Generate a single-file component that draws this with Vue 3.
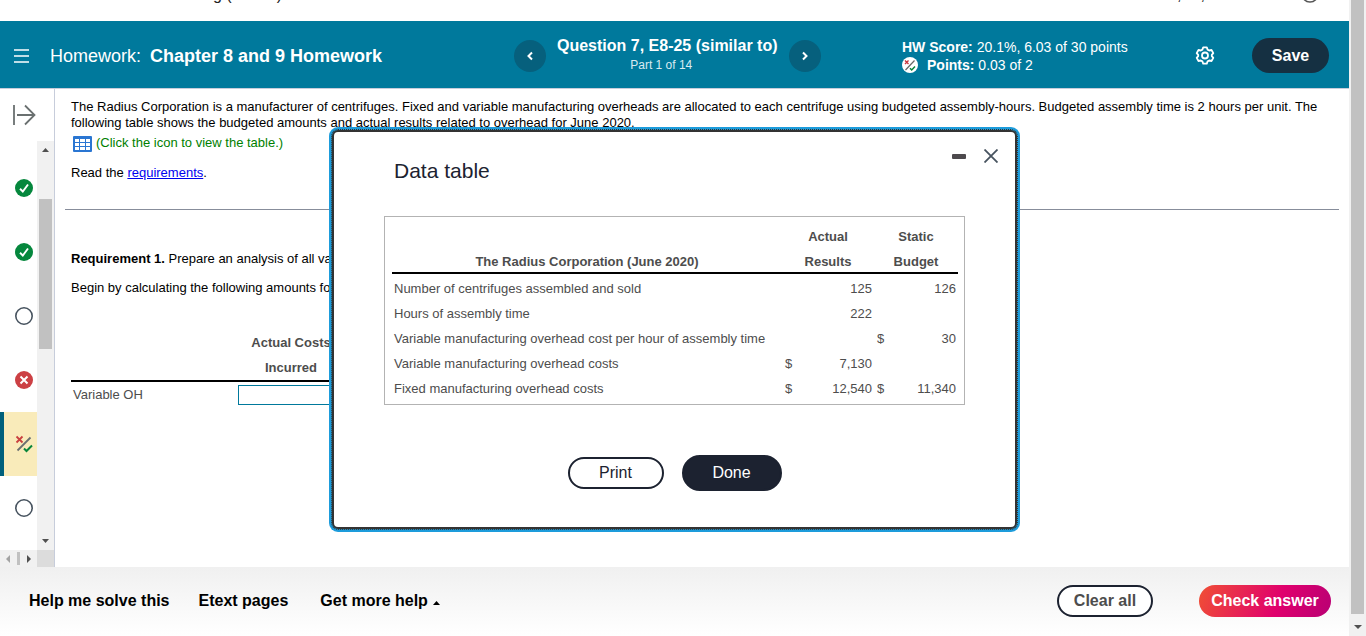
<template>
  <div class="page">
    <div class="main">
      <div class="course-bar">
        <span class="course-name"><span>g (</span><span>)</span></span>
        <span class="user-name"><span>,</span><span>,</span></span>
        <svg class="help-icon" width="18" height="18" viewBox="0 0 18 18">
          <circle cx="9" cy="9" r="8" fill="none" stroke="#555" stroke-width="1.5" />
        </svg>
      </div>

      <header class="header">
        <div class="assignment">
          <button class="icon-button menu" aria-label="Menu">
            <svg width="15" height="14" viewBox="0 0 15 14">
              <path d="M0 1H15M0 7H15M0 13H15" stroke="#fff" stroke-width="1.6" />
            </svg>
          </button>
          <span>Homework:</span>
          <strong>Chapter 8 and 9 Homework</strong>
        </div>
        <div class="question-nav">
          <button class="round" aria-label="Previous question">
            <svg width="8" height="10" viewBox="0 0 8 10">
              <path d="M6 1.5L2.5 5L6 8.5" fill="none" stroke="#fff" stroke-width="2" />
            </svg>
          </button>
          <div class="question">
            <strong>Question 7, E8-25 (similar to)</strong>
            <span class="part">Part 1 of 14</span>
          </div>
          <button class="round" aria-label="Next question">
            <svg width="8" height="10" viewBox="0 0 8 10">
              <path d="M2 1.5L5.5 5L2 8.5" fill="none" stroke="#fff" stroke-width="2" />
            </svg>
          </button>
        </div>
        <div class="score-area">
          <div class="scores">
            <div><b>HW Score:</b> 20.1%, 6.03 of 30 points</div>
            <div class="points">
              <svg width="16" height="16" viewBox="0 0 16 16">
                <circle cx="8" cy="8" r="8" fill="#fff" />
                <path d="M3.5 13L12.5 3.5" stroke="#666" stroke-width="1.2" />
                <path d="M3 3.5L6.5 7M6.5 3.5L3 7" stroke="#c8373e" stroke-width="1.4" />
                <path d="M8 11.2L9.7 13L13 9.5" fill="none" stroke="#07853a" stroke-width="1.5" />
              </svg>
              <span><b>Points:</b> 0.03 of 2</span>
            </div>
          </div>
          <div class="header-actions">
            <button class="icon-button" aria-label="Settings">
              <svg width="20" height="20" viewBox="0 0 20 20" fill="none" stroke="#fff" stroke-width="1.8" stroke-linejoin="round">
                <path d="M8.2 1.4H11.8L12.6 3.6L14.2 4.5L16.5 4L18.3 7.1L16.8 8.9V10.1L18.3 11.9L16.5 15L14.2 14.5L12.6 15.4L11.8 17.6H8.2L7.4 15.4L5.8 14.5L3.5 15L1.7 11.9L3.2 10.1V8.9L1.7 7.1L3.5 4L5.8 4.5L7.4 3.6Z" />
                <circle cx="10" cy="9.5" r="3" />
              </svg>
            </button>
            <button class="save">Save</button>
          </div>
        </div>
      </header>

      <div class="body">
        <aside class="sidebar">
          <button class="icon-button expand" aria-label="Expand question list">
            <svg width="23" height="22" viewBox="0 0 23 22">
              <path d="M1 1V21M4 11H21.5M12 1.5L21.5 11L12 20.5" fill="none" stroke="#6a7070" stroke-width="1.8" />
            </svg>
          </button>
          <div class="list-row">
            <div class="list">
              <a v-for="(item, i) in items" :key="i" href="#" class="item" :class="{ active: item === 'partial' }" :aria-label="`Question ${i + 3}: ${item}`">
                <svg width="18" height="18" viewBox="0 0 18 18" fill="none">
                  <template v-if="item === 'correct'">
                    <circle cx="9" cy="9" r="9" fill="#05873d" />
                    <path d="M5 9.8L7.8 12.5L13 5.5" stroke="#fff" stroke-width="1.9" />
                  </template>
                  <circle v-else-if="item === 'open'" cx="9" cy="9" r="8.2" stroke="#47535f" stroke-width="1.6" />
                  <template v-else-if="item === 'wrong'">
                    <circle cx="9" cy="9" r="9" fill="#cc4044" />
                    <path d="M5.5 5.5L12.5 12.5M12.5 5.5L5.5 12.5" stroke="#fff" stroke-width="2" />
                  </template>
                  <template v-else>
                    <path d="M2.5 15.5L15.5 2.5" stroke="#6a7070" stroke-width="1.8" />
                    <path d="M1.5 1.5L7.5 7.5M7.5 1.5L1.5 7.5" stroke="#c9403f" stroke-width="1.8" />
                    <path d="M9 13.5L11.5 16L17 10.5" stroke="#07853a" stroke-width="2" />
                  </template>
                </svg>
              </a>
            </div>
            <div class="v-scroll">
              <svg width="7" height="4" viewBox="0 0 7 4"><path d="M0 4L3.5 0L7 4Z" fill="#505050" /></svg>
              <div class="v-track"><div class="v-thumb"></div></div>
              <svg width="7" height="4" viewBox="0 0 7 4"><path d="M0 0L3.5 4L7 0Z" fill="#505050" /></svg>
            </div>
          </div>
          <div class="h-scroll">
            <div class="h-track">
              <svg width="4" height="8" viewBox="0 0 4 8"><path d="M4 0L0 4L4 8Z" fill="#a3a3a3" /></svg>
              <div class="h-thumb"></div>
              <svg width="4" height="8" viewBox="0 0 4 8"><path d="M0 0L4 4L0 8Z" fill="#505050" /></svg>
            </div>
            <div class="corner"></div>
          </div>
        </aside>

        <section class="content">
          <p class="intro">
            The Radius Corporation is a manufacturer of centrifuges. Fixed and variable manufacturing overheads are allocated to each centrifuge using budgeted assembly-hours. Budgeted assembly time is 2 hours per unit. The following table shows the budgeted amounts and actual results related to overhead for June 2020.
          </p>
          <button class="table-link">
            <svg width="19" height="16" viewBox="0 0 19 16">
              <rect width="19" height="16" rx="1" fill="#2a76d2" />
              <path v-for="y in [3, 7, 11]" :key="y" :d="`M2 ${y}h4v3h-4zM7 ${y}h5v3h-5zM13 ${y}h4v3h-4z`" fill="#fff" />
            </svg>
            <span>(Click the icon to view the table.)</span>
          </button>
          <p class="read">Read the <a href="#">requirements</a>.</p>
          <hr />
          <p class="requirement"><b>Requirement 1.</b> Prepare an analysis of all va</p>
          <p class="begin">Begin by calculating the following amounts fo</p>
          <table class="answer-table">
            <thead>
              <tr>
                <th></th>
                <th>Actual Costs<br />Incurred</th>
              </tr>
            </thead>
            <tbody>
              <tr>
                <td><label for="variable-oh">Variable OH</label></td>
                <td><input id="variable-oh" v-model="answer" type="text" /></td>
              </tr>
            </tbody>
          </table>
        </section>
      </div>

      <footer class="footer">
        <button class="help">Help me solve this</button>
        <button class="help">Etext pages</button>
        <button class="help more">
          Get more help
          <svg width="7" height="4" viewBox="0 0 7 4"><path d="M0 4L3.5 0L7 4Z" /></svg>
        </button>
        <button class="pill clear">Clear all</button>
        <button class="pill check">Check answer</button>
      </footer>
    </div>

    <div class="page-scroll">
      <div class="page-thumb"></div>
      <svg width="8" height="4" viewBox="0 0 8 4"><path d="M0 0L4 4L8 0Z" fill="#505050" /></svg>
    </div>

    <div class="overlay">
      <div class="dialog" role="dialog" aria-labelledby="dialog-title">
        <div class="dialog-head">
          <h2 id="dialog-title">Data table</h2>
          <div class="window-buttons">
            <button class="icon-button" aria-label="Minimize">
              <svg width="14" height="5" viewBox="0 0 14 5"><rect width="14" height="5" rx="1" fill="#4d4a4d" /></svg>
            </button>
            <button class="icon-button" aria-label="Close">
              <svg width="14" height="14" viewBox="0 0 14 14">
                <path d="M0.5 0.5L13.5 13.5M13.5 0.5L0.5 13.5" stroke="#47535f" stroke-width="1.8" />
              </svg>
            </button>
          </div>
        </div>
        <div class="table-box">
          <table class="data-table">
            <thead>
              <tr>
                <th></th>
                <th colspan="2">Actual</th>
                <th colspan="2">Static</th>
              </tr>
              <tr>
                <th>The Radius Corporation (June 2020)</th>
                <th colspan="2">Results</th>
                <th colspan="2">Budget</th>
              </tr>
            </thead>
            <tbody>
              <tr v-for="row in rows" :key="row.label">
                <td class="label">{{ row.label }}</td>
                <td class="sign">{{ row.actualSign }}</td>
                <td class="actual">{{ row.actual }}</td>
                <td class="sign">{{ row.budgetSign }}</td>
                <td class="budget">{{ row.budget }}</td>
              </tr>
            </tbody>
          </table>
        </div>
        <div class="dialog-actions">
          <button class="print">Print</button>
          <button class="done">Done</button>
        </div>
      </div>
    </div>
  </div>
</template>

<script setup>
import { ref } from 'vue';

const answer = ref('');

const items = ['correct', 'correct', 'open', 'wrong', 'partial', 'open'];

const rows = [
  { label: 'Number of centrifuges assembled and sold', actual: '125', budget: '126' },
  { label: 'Hours of assembly time', actual: '222' },
  { label: 'Variable manufacturing overhead cost per hour of assembly time', budgetSign: '$', budget: '30' },
  { label: 'Variable manufacturing overhead costs', actualSign: '$', actual: '7,130' },
  { label: 'Fixed manufacturing overhead costs', actualSign: '$', actual: '12,540', budgetSign: '$', budget: '11,340' }
];
</script>

<style>
body {
  margin: 0;
  background: #fff;
}
</style>

<style scoped>
.page {
  display: flex;
  height: 100vh;
  overflow: hidden;
  font-family: Arial, "Liberation Sans", sans-serif;
  font-size: 13px;
  line-height: 16px;
  color: #000;
}
.page * {
  box-sizing: border-box;
}
button {
  font-family: inherit;
  cursor: pointer;
}
svg {
  display: block;
  flex: none;
}
p {
  margin: 0;
}
.icon-button {
  display: flex;
  padding: 0;
  border: 0;
  background: none;
}
.main {
  flex: 1;
  min-width: 0;
  display: flex;
  flex-direction: column;
}

/* course bar, scrolled mostly out of view */
.course-bar {
  flex: none;
  display: flex;
  align-items: flex-end;
  height: 21px;
  padding: 0 30px 18px 213px;
  font-size: 16px;
  color: #222;
}
.course-name {
  display: flex;
  gap: 45px;
}
.user-name {
  display: flex;
  gap: 19px;
  margin-left: auto;
  margin-right: 96px;
}

.header {
  flex: none;
  display: grid;
  grid-template-columns: 514px 388px 1fr;
  align-items: center;
  height: 68px;
  padding-top: 2px;
  background: #00799c;
  border-bottom: 1px solid #c7cddb;
  color: #fff;
}
.assignment {
  display: flex;
  align-items: center;
  padding-left: 14px;
  font-size: 18px;
}
.menu {
  margin-right: 21px;
}
.assignment strong {
  margin-left: 9px;
}
.question-nav {
  display: flex;
  align-items: center;
}
.round {
  display: flex;
  align-items: center;
  justify-content: center;
  width: 32px;
  height: 32px;
  padding: 0;
  border: 0;
  border-radius: 50%;
  background: #06607d;
}
.question {
  display: flex;
  flex-direction: column;
  align-items: center;
  padding: 0 11px 2px;
  font-size: 12px;
  line-height: 18px;
  color: #d9ebf1;
}
.question strong {
  font-size: 16px;
  line-height: 20px;
  color: #fff;
}
.part {
  padding-right: 12px;
}
.score-area {
  display: flex;
  align-items: center;
  justify-content: space-between;
  padding-right: 20px;
  font-size: 14px;
  line-height: 18px;
}
.points {
  display: flex;
  align-items: center;
  gap: 9px;
}
.header-actions {
  display: flex;
  align-items: center;
  gap: 37px;
}
.save {
  width: 77px;
  height: 35px;
  border: 0;
  border-radius: 18px;
  background: #153042;
  font-size: 16px;
  font-weight: bold;
  color: #fff;
}

.body {
  flex: 1;
  min-height: 0;
  display: flex;
}
.sidebar {
  flex: none;
  display: flex;
  flex-direction: column;
  width: 55px;
  border-right: 1px solid #c7cddb;
}
.expand {
  height: 52px;
  padding: 15px 0 0 13px;
}
.list-row {
  flex: 1;
  min-height: 0;
  display: flex;
}
.list {
  flex: 1;
  padding-top: 15px;
  overflow: hidden;
}
.item {
  display: flex;
  align-items: center;
  height: 64px;
  padding-left: 11px;
  border-left: 4px solid transparent;
}
.item.active {
  background: #f9ebba;
  border-left-color: #00607c;
}
.v-scroll {
  display: flex;
  flex-direction: column;
  align-items: center;
  width: 17px;
  padding: 7px 2px;
  background: #f1f1f1;
}
.v-track {
  flex: 1;
  width: 100%;
  padding-top: 47px;
}
.v-thumb {
  height: 150px;
  background: #c1c1c1;
}
.h-scroll {
  display: flex;
  height: 17px;
}
.h-track {
  flex: 1;
  display: flex;
  align-items: center;
  justify-content: space-between;
  padding: 0 6px;
  background: #f1f1f1;
}
.h-thumb {
  width: 3px;
  height: 13px;
  background: #c1c1c1;
}
.corner {
  width: 17px;
  background: #dcdcdc;
}

.content {
  flex: 1;
  min-width: 0;
  padding: 10px 10px 0;
}
.intro {
  padding: 0 6px;
}
.table-link {
  display: flex;
  gap: 4px;
  margin: 4px 0 13px 8px;
  padding: 0;
  border: 0;
  background: none;
  font-size: 13px;
  line-height: 16px;
  color: #008000;
}
.table-link svg {
  margin-top: 1px;
}
.read,
.requirement,
.begin {
  padding-left: 6px;
}
.read a {
  color: #0000ee;
}
hr {
  margin: 28px 0 41px;
  border: 0;
  border-top: 1px solid #878d9b;
}
.begin {
  margin-top: 13px;
}
.answer-table {
  margin: 34px 0 0 6px;
  border-spacing: 0;
  color: #4d4d4d;
}
.answer-table th {
  width: 112px;
  padding: 0;
  border-bottom: 2px solid #000;
  line-height: 25px;
}
.answer-table th:first-child {
  width: 164px;
}
.answer-table td {
  padding: 3px 2px;
}
.answer-table input {
  display: block;
  width: 106px;
  height: 20px;
  margin-left: 1px;
  border: 1px solid #00799c;
}

.footer {
  flex: none;
  display: flex;
  align-items: center;
  height: 69px;
  padding: 0 18px 1px 29px;
  background: linear-gradient(#f0f0f0, #fff);
}
.help {
  display: flex;
  align-items: center;
  gap: 5px;
  margin-right: 29px;
  padding: 0;
  border: 0;
  background: none;
  font-size: 16px;
  font-weight: bold;
  color: #000;
}
.more {
  margin-left: 3px;
}
.more svg {
  margin-top: 3px;
}
.pill {
  height: 32px;
  padding: 0;
  border-radius: 16px;
  font-size: 16px;
  font-weight: bold;
}
.clear {
  width: 96px;
  margin-left: auto;
  border: 2px solid #1c2230;
  background: #fff;
  color: #4d4d4d;
}
.check {
  width: 132px;
  margin-left: 46px;
  border: 0;
  background: linear-gradient(110deg, #f04f34, #e0006d 60%, #b80074);
  color: #fff;
}

.page-scroll {
  flex: none;
  display: flex;
  flex-direction: column;
  align-items: center;
  gap: 11px;
  width: 17px;
  padding: 0 2px 7px;
  background: #f1f1f1;
}
.page-thumb {
  flex: 1;
  width: 100%;
  background: #c1c1c1;
}

.overlay {
  position: absolute;
  top: 130px;
  left: 0;
  right: 17px;
  display: flex;
  justify-content: center;
}
.dialog {
  width: 685px;
  padding: 16px 50px 36px;
  border: 2px solid #333;
  border-radius: 6px;
  outline: 1px dotted #333;
  box-shadow: 0 0 0 3px #1d9cdb;
  background: #fff;
}
.dialog-head {
  display: flex;
  justify-content: space-between;
  height: 68px;
  padding-left: 10px;
}
.dialog-head h2 {
  margin: 11px 0 0;
  font-size: 21px;
  font-weight: normal;
  line-height: 24px;
  color: #1c2230;
}
.window-buttons {
  display: flex;
  align-items: center;
  gap: 18px;
  height: 16px;
  margin-right: -33px;
}
.table-box {
  padding: 7px 6px 5px 7px;
  border: 1px solid #b3b3b3;
}
.data-table {
  width: 100%;
  border-spacing: 0;
  color: #4d4d4d;
}
.data-table th {
  padding: 0;
  line-height: 25px;
}
.data-table tr:last-child th {
  padding-top: 2px;
  border-bottom: 2px solid #000;
  line-height: 21px;
}
.data-table td {
  height: 25px;
  padding: 4px 2px 0;
  line-height: 21px;
}
.data-table .sign {
  width: 16px;
  padding-left: 3px;
}
.data-table .actual {
  width: 76px;
  text-align: right;
}
.data-table .budget {
  width: 68px;
  text-align: right;
}
.dialog-actions {
  display: flex;
  align-items: center;
  justify-content: center;
  gap: 18px;
  margin-top: 50px;
}
.print,
.done {
  padding: 0;
  border: 2px solid #1c2230;
  border-radius: 18px;
  font-size: 16px;
}
.print {
  width: 96px;
  height: 32px;
  background: #fff;
  color: #1c2230;
}
.done {
  width: 100px;
  height: 36px;
  background: #1c2230;
  color: #fff;
}
</style>
